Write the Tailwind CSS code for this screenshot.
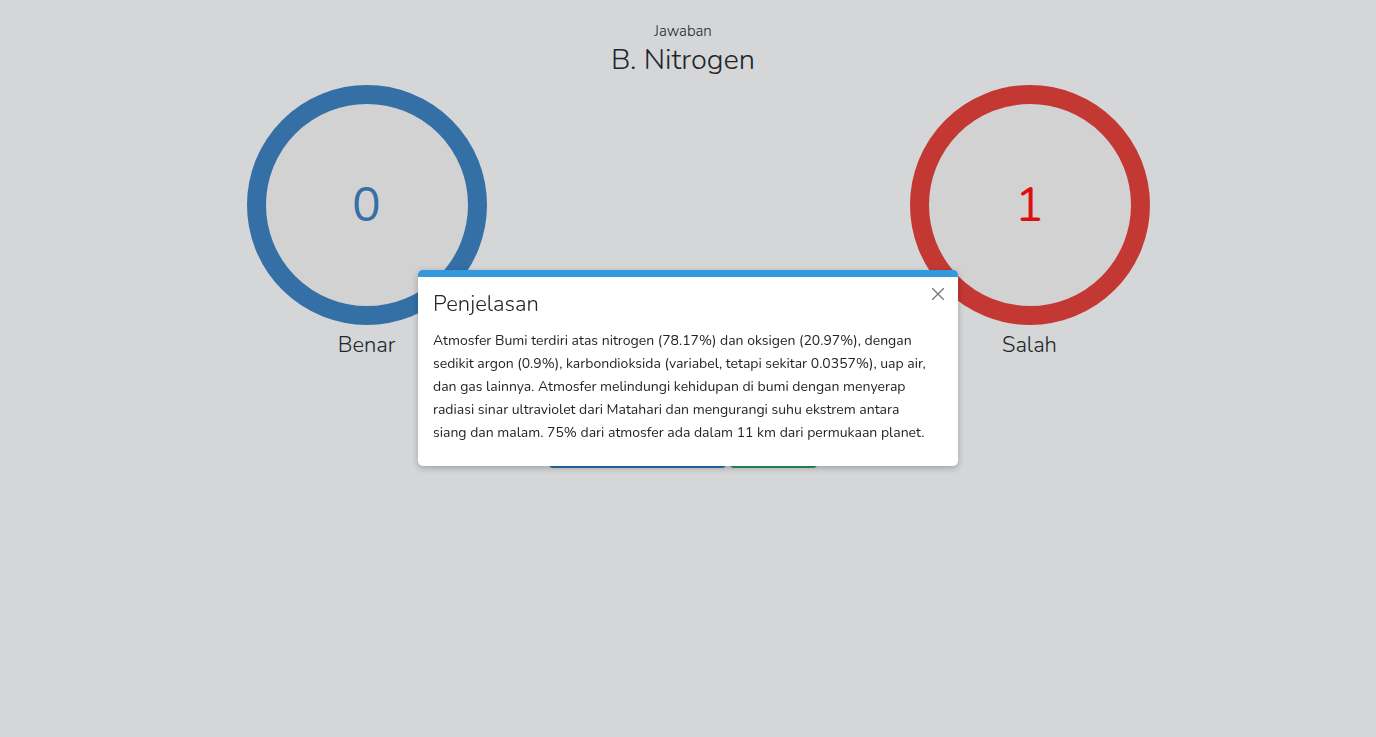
<!DOCTYPE html>
<html lang="id">
<head>
<meta charset="utf-8">
<meta name="viewport" content="width=device-width, initial-scale=1">
<title>Jawaban</title>
<script src="https://cdn.jsdelivr.net/npm/@tailwindcss/browser@4"></script>
</head>
<body class="min-h-screen bg-[#d4d6d8] font-[Nunito,Lato,sans-serif] text-[14px] leading-[23px] text-[#212529]">
<main class="pt-5 pr-[30px] pl-5">
  <header class="text-center">
    <p class="text-[15px] leading-[23px] font-light">Jawaban</p>
    <h1 class="text-[29px] leading-[34px] font-light">B. Nitrogen</h1>
  </header>
  <section class="-mr-[15px] ml-[15px] grid grid-cols-2 pt-2">
    <div class="flex flex-col items-center">
      <div class="flex size-60 items-center justify-center rounded-full border-[19px] border-[#3470a6] bg-[#d2d2d2] text-5xl text-[#3470a6]">0</div>
      <h2 class="mt-1 text-[22px] leading-8 font-light">Benar</h2>
    </div>
    <div class="flex flex-col items-center">
      <div class="flex size-60 items-center justify-center rounded-full border-[19px] border-[#c43833] bg-[#d2d2d2] text-5xl text-[#e00d0f]">1</div>
      <h2 class="mt-1 text-[22px] leading-8 font-light">Salah</h2>
    </div>
  </section>
  <div class="mt-[71px] flex justify-center gap-1">
    <button type="button" aria-label="Pertanyaan berikutnya" class="h-9 w-[177px] rounded bg-[#2874b4]"></button>
    <button type="button" aria-label="Selesai" class="h-9 w-[87px] rounded bg-[#2c945e]"></button>
  </div>
</main>
<div class="fixed inset-0 flex items-center justify-center pb-px">
  <section role="dialog" aria-labelledby="dialog-title" class="relative w-[540px] max-w-full rounded-[5px] border-t-[7px] border-[#3598dc] bg-white px-[15px] pt-[13px] pb-[22px] shadow-[0_2px_6px_rgba(0,0,0,0.25)]">
    <h2 id="dialog-title" class="text-[22px] leading-7 font-light">Penjelasan</h2>
    <p class="mt-[11px] whitespace-nowrap">Atmosfer Bumi terdiri atas nitrogen (78.17%) dan oksigen (20.97%), dengan<br>
      sedikit argon (0.9%), karbondioksida (variabel, tetapi sekitar 0.0357%), uap air,<br>
      dan gas lainnya. Atmosfer melindungi kehidupan di bumi dengan menyerap<br>
      radiasi sinar ultraviolet dari Matahari dan mengurangi suhu ekstrem antara<br>
      siang dan malam. 75% dari atmosfer ada dalam 11 km dari permukaan planet.</p>
    <button type="button" aria-label="Tutup" class="absolute top-[11px] right-3.5 text-[#777]">
      <svg class="block size-3" viewBox="0 0 12 12" fill="none" stroke="currentColor" stroke-width="1.3"><path d="M0 0 12 12M12 0 0 12"/></svg>
    </button>
  </section>
</div>
</body>
</html>
